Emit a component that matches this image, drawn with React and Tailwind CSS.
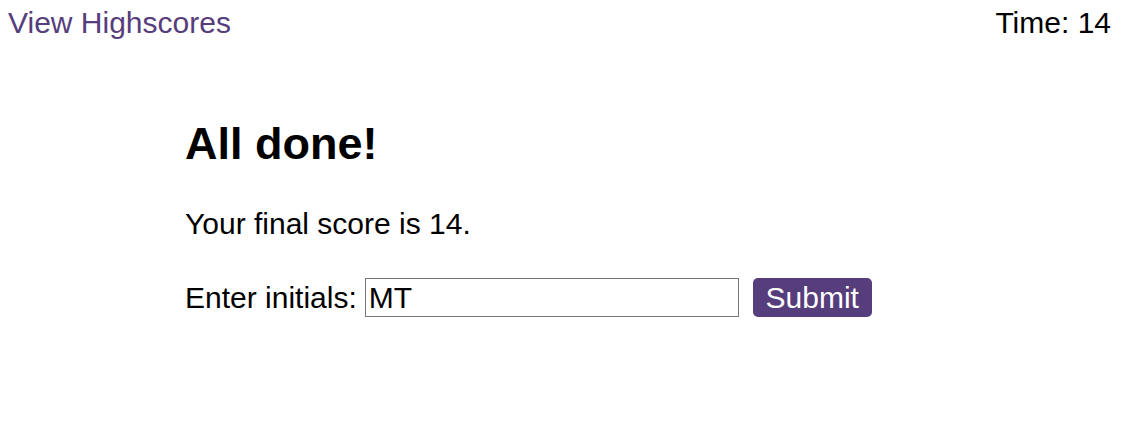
import { useState } from "react";

export default function App() {
  const [initials, setInitials] = useState("MT");

  return (
    <div className="min-h-[427px] bg-white text-black font-['Liberation_Sans',Arial,sans-serif] text-[30px]">
      <header className="flex justify-between pt-[6px] pl-2 pr-[10px] leading-[33px]">
        <a href="#" className="text-[#563d7c]">View Highscores</a>
        <span>Time: 14</span>
      </header>

      <main className="pl-[185px] mt-[80px]">
        <h1 className="text-[45px] font-bold leading-[50px]">All done!</h1>
        <p className="mt-[38px] leading-[33px]">Your final score is 14.</p>

        <div className="mt-[38px] flex items-center leading-[33px]">
          <label htmlFor="initials">Enter initials:</label>
          <input
            id="initials"
            value={initials}
            onChange={(e) => setInitials(e.target.value)}
            className="ml-[8px] w-[374px] h-[39px] border border-[#767676] px-[3px] outline-none leading-[33px]"
          />
          <button className="ml-[14px] w-[119px] h-[39px] rounded-[5px] bg-[#563d7c] text-white leading-[33px]">
            Submit
          </button>
        </div>
      </main>
    </div>
  );
}
